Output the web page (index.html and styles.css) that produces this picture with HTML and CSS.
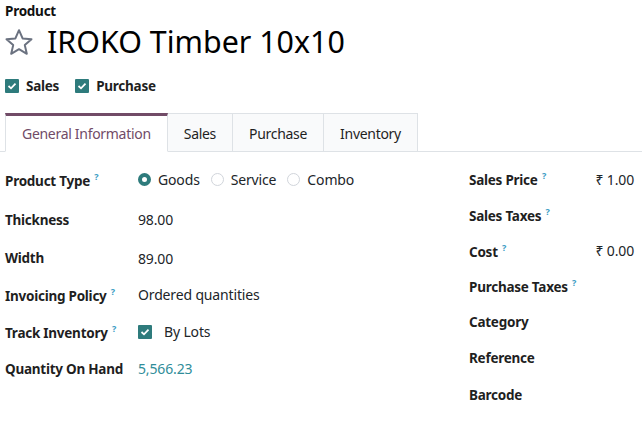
FILE: index.html
```html
<!DOCTYPE html>
<html>
<head>
<meta charset="utf-8">
<link rel="stylesheet" href="styles.css">
</head>
<body>
<div class="page">
  <div class="title-label">Product</div>
  <div class="title">
    <svg class="star" width="30" height="28" viewBox="0 0 30 28"><path d="M15 2.2 L18.6 10.4 L27.5 11.2 L20.8 17.1 L22.8 25.8 L15 21.2 L7.2 25.8 L9.2 17.1 L2.5 11.2 L11.4 10.4 Z" fill="none" stroke="#6b7280" stroke-width="2" stroke-linejoin="round"/></svg>
    <h1 class="name">IROKO Timber 10x10</h1>
  </div>
  <div class="flags">
    <label class="flag"><span class="cb"><svg width="10" height="8" viewBox="0 0 10 8"><path d="M1.5 4 L4 6.3 L8.5 1.7" fill="none" stroke="#fff" stroke-width="1.8"/></svg></span>Sales</label>
    <label class="flag"><span class="cb"><svg width="10" height="8" viewBox="0 0 10 8"><path d="M1.5 4 L4 6.3 L8.5 1.7" fill="none" stroke="#fff" stroke-width="1.8"/></svg></span>Purchase</label>
  </div>
</div>
<div class="tabs">
  <div class="tab active">General Information</div>
  <div class="tab">Sales</div>
  <div class="tab">Purchase</div>
  <div class="tab">Inventory</div>
</div>
<div class="form">
  <div class="group left">
    <div class="row r39"><div class="lbl">Product Type <sup>?</sup></div>
      <div class="val radios">
        <span class="radio on"></span><span class="rl">Goods</span>
        <span class="radio"></span><span class="rl">Service</span>
        <span class="radio"></span><span class="rl">Combo</span>
      </div>
    </div>
    <div class="row r41"><div class="lbl">Thickness</div><div class="val">98.00</div></div>
    <div class="row r36"><div class="lbl">Width</div><div class="val">89.00</div></div>
    <div class="row r37"><div class="lbl">Invoicing Policy <sup>?</sup></div><div class="val">Ordered quantities</div></div>
    <div class="row r37"><div class="lbl">Track Inventory <sup>?</sup></div><div class="val"><span class="cb"><svg width="10" height="8" viewBox="0 0 10 8"><path d="M1.5 4 L4 6.3 L8.5 1.7" fill="none" stroke="#fff" stroke-width="1.8"/></svg></span><span class="lots">By Lots</span></div></div>
    <div class="row r37"><div class="lbl">Quantity On Hand</div><div class="val link">5,566.23</div></div>
  </div>
  <div class="group right">
    <div class="row r36"><div class="lbl">Sales Price <sup>?</sup></div><div class="val num">₹ 1.00</div></div>
    <div class="row r36"><div class="lbl">Sales Taxes <sup>?</sup></div><div class="val num"></div></div>
    <div class="row r35"><div class="lbl">Cost <sup>?</sup></div><div class="val num">₹ 0.00</div></div>
    <div class="row r36"><div class="lbl">Purchase Taxes <sup>?</sup></div><div class="val num"></div></div>
    <div class="row r35"><div class="lbl">Category</div><div class="val num"></div></div>
    <div class="row r37"><div class="lbl">Reference</div><div class="val num"></div></div>
    <div class="row r37"><div class="lbl">Barcode</div><div class="val num"></div></div>
  </div>
</div>
</body>
</html>
```
FILE: styles.css
```css
html, body {
  margin: 0;
  padding: 0;
  background: #fff;
}
body {
  font-family: "Noto Sans", "Open Sans", sans-serif;
  font-size: 14px;
  letter-spacing: -0.15px;
  color: #212529;
  width: 642px;
  height: 429px;
  overflow: hidden;
}
.page {
  padding: 0 5px;
}
.title-label {
  font-weight: 700;
  font-size: 13.5px;
  letter-spacing: -0.25px;
  line-height: 20px;
  padding-top: 1px;
  color: #111;
}
.title {
  display: flex;
  align-items: center;
  gap: 13px;
  height: 42px;
}
.star {
  display: block;
  margin-left: -1px;
}
.name {
  margin: 0;
  font-weight: 400;
  font-size: 30.4px;
  letter-spacing: 0;
  line-height: 42px;
  color: #000;
}
.flags {
  display: flex;
  gap: 16px;
  margin-top: 15px;
  height: 16px;
  align-items: center;
}
.flag {
  display: flex;
  align-items: center;
  gap: 7px;
  font-weight: 700;
  font-size: 13.5px;
  letter-spacing: -0.25px;
  color: #1f1f1f;
}
.cb {
  width: 14px;
  height: 14px;
  background: #2e7b7c;
  border-radius: 1px;
  display: inline-flex;
  align-items: center;
  justify-content: center;
  flex: none;
}
.tabs {
  margin-top: 19px;
  display: flex;
  padding-left: 5px;
  border-bottom: 1px solid #dee2e6;
  height: 38px;
}
.tab {
  box-sizing: border-box;
  height: 39px;
  padding: 1px 16px 0;
  display: flex;
  align-items: center;
  background: #f9fafb;
  border: 1px solid #dee2e6;
  border-left: none;
  color: #1f1f1f;
  letter-spacing: -0.3px;
}
.tab.active {
  background: #fff;
  border-left: 1px solid #dee2e6;
  border-top: 3px solid #714b67;
  border-bottom-color: #fff;
  color: #714b67;
  padding: 0 16px 1px;
}
.form {
  display: flex;
  padding: 8px 8px 0 5px;
}
.group.left {
  width: 464px;
}
.group.right {
  flex: 1;
  padding-top: 1px;
}
.row {
  display: flex;
  align-items: center;
}
.r35 { height: 35px; }
.r36 { height: 36px; }
.r37 { height: 37px; }
.r39 { height: 39px; }
.r41 { height: 41px; }
.lbl {
  font-weight: 700;
  font-size: 13.5px;
  letter-spacing: -0.25px;
  width: 133px;
  flex: none;
  color: #1f1f1f;
}
.right .lbl {
  width: 120px;
}
sup {
  font-size: 9px;
  color: #3a9cc4;
  vertical-align: 6px;
  margin-left: 1px;
  font-weight: 700;
}
.val {
  display: flex;
  align-items: center;
}
.num {
  flex: 1;
  justify-content: flex-end;
}
.radio {
  width: 13px;
  height: 13px;
  box-sizing: border-box;
  border-radius: 50%;
  border: 1px solid #d1d5db;
  margin-right: 7px;
}
.radio.on {
  border: 4px solid #2e7b7c;
  background: #fff;
}
.rl {
  margin-right: 11px;
}
.lots {
  margin-left: 12px;
}
.link {
  color: #2f8d99;
}
```
